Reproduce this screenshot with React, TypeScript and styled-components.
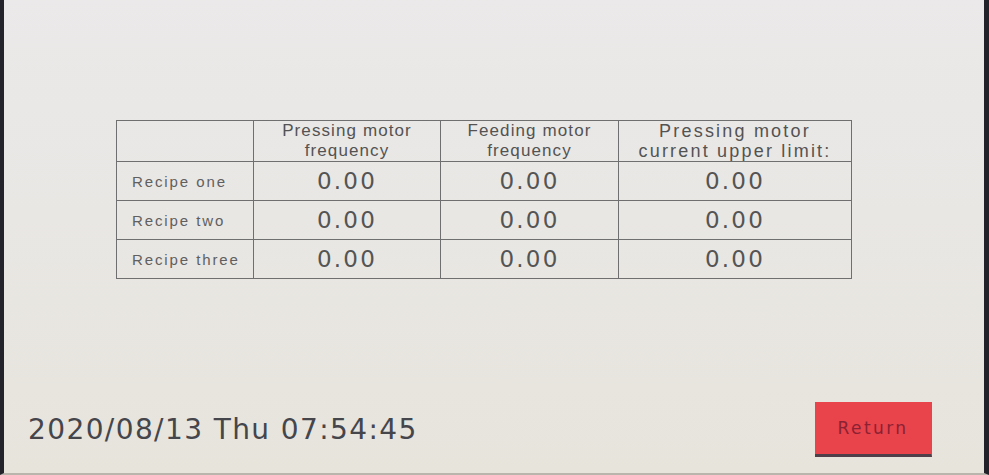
import React from 'react'
import styled, { createGlobalStyle } from 'styled-components'

type Recipe = {
  name: string
  pressing: string
  feeding: string
  current: string
}

const recipes: Recipe[] = [
  { name: 'Recipe one', pressing: '0.00', feeding: '0.00', current: '0.00' },
  { name: 'Recipe two', pressing: '0.00', feeding: '0.00', current: '0.00' },
  { name: 'Recipe three', pressing: '0.00', feeding: '0.00', current: '0.00' },
]

const App = () => {
  return (
    <>
      <GlobalStyle />
      <Screen>
        <TableWrap>
          <RecipeTable>
            <colgroup>
              <col style={{ width: 137 }} />
              <col style={{ width: 187 }} />
              <col style={{ width: 178 }} />
              <col style={{ width: 233 }} />
            </colgroup>
            <thead>
              <tr>
                <HeadCell />
                <HeadCell>
                  Pressing motor
                  <br />
                  frequency
                </HeadCell>
                <HeadCell>
                  Feeding motor
                  <br />
                  frequency
                </HeadCell>
                <HeadCell $large>
                  Pressing motor
                  <br />
                  current upper limit:
                </HeadCell>
              </tr>
            </thead>
            <tbody>
              {recipes.map((r) => (
                <tr key={r.name}>
                  <NameCell>{r.name}</NameCell>
                  <ValueCell>{r.pressing}</ValueCell>
                  <ValueCell>{r.feeding}</ValueCell>
                  <ValueCell>{r.current}</ValueCell>
                </tr>
              ))}
            </tbody>
          </RecipeTable>
        </TableWrap>
        <Footer>
          <Clock>2020/08/13 Thu 07:54:45</Clock>
          <ReturnButton type="button">Return</ReturnButton>
        </Footer>
      </Screen>
    </>
  )
}

export default App

const GlobalStyle = createGlobalStyle`
  html, body {
    margin: 0;
    padding: 0;
    background: #1e1e26;
  }
`

const Screen = styled.div`
  width: 989px;
  height: 475px;
  box-sizing: border-box;
  display: flex;
  flex-direction: column;
  border-left: 4px solid #23232c;
  border-right: 5px solid #22222b;
  border-bottom: 2px solid #b9b5ad;
  background: linear-gradient(180deg, #ebe9e9 0%, #e9e7e4 45%, #e7e4dc 100%);
  font-family: 'Liberation Sans', Arial, sans-serif;
`

const TableWrap = styled.div`
  padding: 120px 0 0 112px;
`

const RecipeTable = styled.table`
  border-collapse: collapse;
  table-layout: fixed;
  width: 735px;
  border: 1.5px solid #6e6e6e;

  td,
  th {
    border: 1px solid #6f6f6f;
    padding: 0;
  }
`

const HeadCell = styled.th<{ $large?: boolean }>`
  height: 40px;
  font-weight: normal;
  color: #535353;
  text-align: center;
  vertical-align: middle;
  font-size: ${(p) => (p.$large ? '18px' : '17px')};
  letter-spacing: ${(p) => (p.$large ? '2.2px' : '1.1px')};
  line-height: 20px;
`

const NameCell = styled.td`
  height: 38px;
  padding-left: 15px !important;
  font-size: 15px;
  letter-spacing: 1.9px;
  color: #606060;
`

const ValueCell = styled.td`
  height: 38px;
  text-align: center;
  font-family: 'DejaVu Sans', Verdana, sans-serif;
  font-size: 23px;
  letter-spacing: 2.2px;
  color: #545454;
`

const Footer = styled.div`
  margin-top: auto;
  display: flex;
  align-items: center;
  justify-content: space-between;
  padding: 0 52px 16px 24px;
`

const Clock = styled.div`
  font-family: 'DejaVu Sans', Verdana, sans-serif;
  font-size: 28px;
  letter-spacing: 1.4px;
  color: #45454c;
`

const ReturnButton = styled.button`
  width: 117px;
  height: 55px;
  border: none;
  border-right: 1px solid #8a6b70;
  border-bottom: 3px solid #4e3f48;
  background: #e9434c;
  color: #8a2233;
  font-family: 'DejaVu Sans', Verdana, sans-serif;
  font-size: 17px;
  letter-spacing: 2.4px;
  padding: 0;
  cursor: pointer;
`
